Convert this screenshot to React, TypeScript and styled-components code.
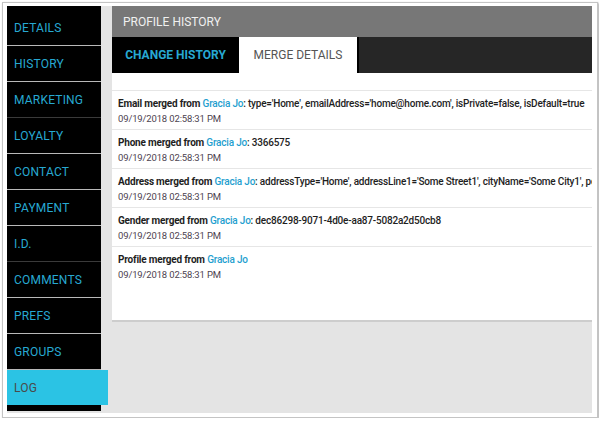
import * as React from "react";
import styled, { createGlobalStyle } from "styled-components";

const GlobalStyle = createGlobalStyle`
  body {
    margin: 0;
    background: #ffffff;
    font-family: Roboto, "Liberation Sans", sans-serif;
  }
`;

const navItems = [
  "DETAILS",
  "HISTORY",
  "MARKETING",
  "LOYALTY",
  "CONTACT",
  "PAYMENT",
  "I.D.",
  "COMMENTS",
  "PREFS",
  "GROUPS",
  "LOG",
];

const darkLines = ["MARKETING", "I.D."];

const merges = [
  {
    field: "Email",
    detail:
      ": type='Home', emailAddress='home@home.com', isPrivate=false, isDefault=true",
  },
  { field: "Phone", detail: ": 3366575" },
  {
    field: "Address",
    detail:
      ": addressType='Home', addressLine1='Some Street1', cityName='Some City1', postalCode='12345'",
  },
  { field: "Gender", detail: ": dec86298-9071-4d0e-aa87-5082a2d50cb8" },
  { field: "Profile", detail: "" },
];

const Frame = styled.div`
  margin: 2px 0 0 2px;
  width: 586px;
  height: 407px;
  padding: 3px 4px 4px 4px;
  border: 1px solid #c4c4c4;
  box-shadow: 1px 1px 2px rgba(0, 0, 0, 0.35);
`;

const Screen = styled.div`
  display: flex;
  align-items: flex-start;
  width: 585px;
  height: 407px;
  background: #e4e4e4;
  overflow: hidden;
`;

const Sidebar = styled.nav`
  flex: 0 0 94px;
  height: 405px;
  box-sizing: border-box;
  padding-top: 4px;
  background: #000000;
  display: flex;
  flex-direction: column;
  position: relative;
  z-index: 1;
`;

const NavItem = styled.div<{ $active?: boolean; $darkLine?: boolean }>`
  height: 35px;
  display: flex;
  align-items: center;
  padding-left: 7px;
  font-size: 12px;
  letter-spacing: 0.2px;
  color: ${(p) => (p.$active ? "#4a4a4a" : "#27a9d2")};
  background: ${(p) => (p.$active ? "#2bc3e4" : "transparent")};
  margin-right: ${(p) => (p.$active ? "-7px" : "0")};
  border-bottom: ${(p) =>
    p.$active ? "none" : `1px solid ${p.$darkLine ? "#3a3a3a" : "#b9b9b9"}`};
`;

const Main = styled.main`
  flex: 1;
  min-width: 0;
  padding-left: 11px;
`;

const Panel = styled.section`
  background: #ffffff;
  border-bottom: 2px solid #cdcdcd;
  height: 314px;
  overflow: hidden;
`;

const PanelHeader = styled.header`
  height: 31px;
  display: flex;
  align-items: center;
  padding-left: 11px;
  background: #777777;
  color: #f0f0f0;
  font-size: 12px;
`;

const TabBar = styled.div`
  height: 36px;
  display: flex;
  background: #262626;
`;

const Tab = styled.div<{ $selected?: boolean; $width: number }>`
  width: ${(p) => p.$width}px;
  box-sizing: border-box;
  display: flex;
  align-items: center;
  justify-content: center;
  font-size: 12px;
  font-weight: ${(p) => (p.$selected ? 400 : 700)};
  color: ${(p) => (p.$selected ? "#555555" : "#27a9d2")};
  background: ${(p) => (p.$selected ? "#ffffff" : "#000000")};
  border-right: ${(p) => (p.$selected ? "2px solid #000000" : "none")};
`;

const List = styled.div`
  margin-top: 17px;
  border-top: 1px solid #e6e6e6;
`;

const Entry = styled.div<{ $last?: boolean }>`
  padding: 5px 6px 3px 6px;
  border-bottom: ${(p) => (p.$last ? "none" : "1px solid #e6e6e6")};
  line-height: 15px;
  white-space: nowrap;
`;

const Summary = styled.div`
  font-size: 10px;
  font-weight: 500;
  letter-spacing: -0.2px;
  color: #1e1e1e;
`;

const Action = styled.span`
  font-weight: 700;
`;

const Who = styled.span`
  color: #1fa0cf;
`;

const Stamp = styled.div`
  font-size: 9.5px;
  letter-spacing: -0.15px;
  color: #4d4350;
`;

const App = () => {
  return (
    <>
      <GlobalStyle />
      <Frame>
        <Screen>
          <Sidebar>
            {navItems.map((item) => (
              <NavItem
                key={item}
                $active={item === "LOG"}
                $darkLine={darkLines.includes(item)}
              >
                {item}
              </NavItem>
            ))}
          </Sidebar>
          <Main>
            <Panel>
              <PanelHeader>PROFILE HISTORY</PanelHeader>
              <TabBar>
                <Tab $width={127}>CHANGE HISTORY</Tab>
                <Tab $width={120} $selected>
                  MERGE DETAILS
                </Tab>
              </TabBar>
              <List>
                {merges.map((m, i) => (
                  <Entry key={m.field} $last={i === merges.length - 1}>
                    <Summary>
                      <Action>{m.field} merged from </Action>
                      <Who>Gracia Jo</Who>
                      {m.detail}
                    </Summary>
                    <Stamp>09/19/2018 02:58:31 PM</Stamp>
                  </Entry>
                ))}
              </List>
            </Panel>
          </Main>
        </Screen>
      </Frame>
    </>
  );
};

export default App;
